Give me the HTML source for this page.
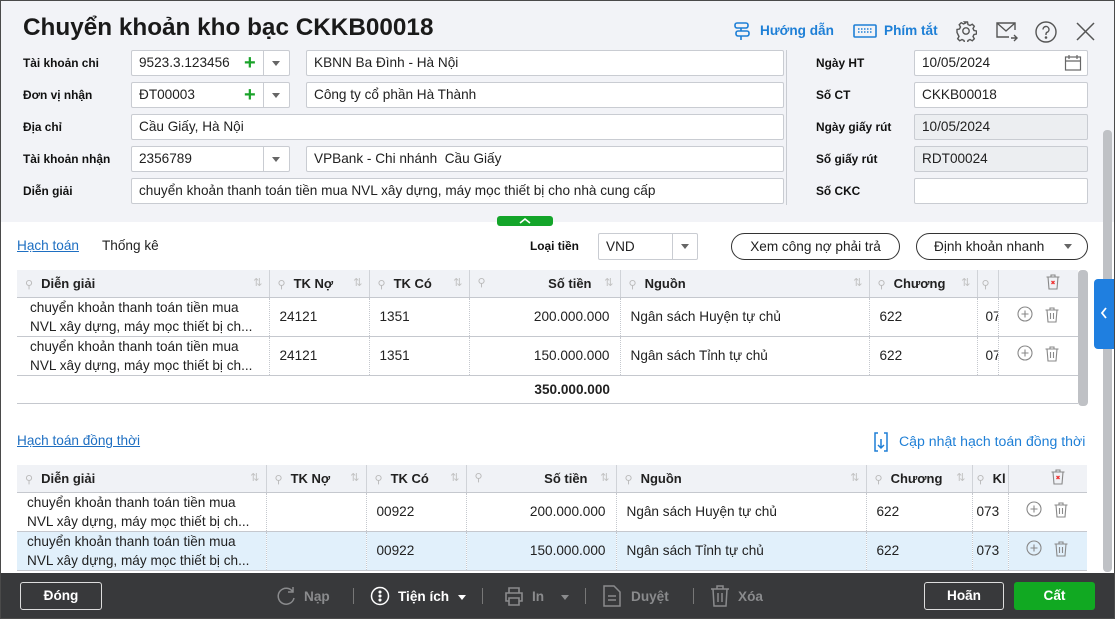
<!DOCTYPE html>
<html><head><meta charset="utf-8"><style>
*{box-sizing:border-box;margin:0;padding:0}
body{width:1115px;height:619px;overflow:hidden;position:relative;font-family:"Liberation Sans","DejaVu Sans",sans-serif;font-size:13.6px;color:#212121;background:#fff}
.a{position:absolute}
.top{left:0;top:0;width:1115px;height:222px;background:#f2f3f7}
.frame{left:0;top:0;width:1115px;height:619px;border:1px solid #4a4a4a;pointer-events:none;z-index:50}
.lbl{font-weight:bold;font-size:11.9px;color:#111}
.in{background:#fff;border:1px solid #c9ccd2;border-radius:2px;height:26px;line-height:24px;padding-left:7px;font-size:13.6px;white-space:nowrap;overflow:hidden}
.dis{background:#eceef1}
.arr{width:0;height:0;border-left:4.5px solid transparent;border-right:4.5px solid transparent;border-top:5px solid #666}
.plus{color:#1aa32a;font-size:20px;font-weight:bold;line-height:24px}
table{border-collapse:collapse;table-layout:fixed;position:absolute}
th{background:#f0f2f6;height:27px;font-weight:bold;font-size:13px;text-align:left;border-right:1px solid #d0d3d8;border-bottom:1px solid #c5c8ce;padding:0 8px;white-space:nowrap;overflow:hidden;position:relative}
td{height:39px;border-right:1px dotted #c5c8ce;border-bottom:1px solid #c5c8ce;padding:0 10px;font-size:13.6px;line-height:19px;white-space:nowrap;overflow:hidden}
td.r{text-align:right}
.pin{color:#bbb;font-weight:normal;font-size:11px;margin-right:8px}
.srt{position:absolute;right:6px;top:6px;color:#c2c2c2;font-weight:normal;font-size:11px}
.pill{border:1px solid #333;border-radius:14px;height:27px;line-height:25px;text-align:center;font-size:13.6px;background:#fff}
.foot{left:0;top:573px;width:1115px;height:46px;background:#38393b}
.fb{color:#fff;font-weight:bold;font-size:13.6px}
.gr{color:#8a8b8d;font-weight:bold;font-size:13.6px}
.act{border-right:none;padding:0;text-align:center}
tr.tot td{height:28px;border-right:none}
</style></head><body>
<svg width="0" height="0" style="position:absolute"><defs>
<g id="pl" fill="none" stroke="#888" stroke-width="1.1"><circle cx="8" cy="8" r="7"/><path d="M8 4.5v7M4.5 8h7"/></g>
<g id="tr" fill="none" stroke="#888" stroke-width="1.1"><path d="M1.5 4h13M6 4V2h4v2M3 4l1 12h8l1-12M6.5 7v6M9.5 7v6"/></g>
<g id="trr" fill="none" stroke="#888" stroke-width="1.1"><path d="M1.5 4h13M6 4V2h4v2M3 4l1 12h8l1-12"/><path d="M6.5 8l3 3M9.5 8l-3 3" stroke="#e33" stroke-width="1.3"/></g>
</defs></svg>
<div class="a top"></div>
<div class="a" style="left:23px;top:14px;font-size:24.3px;font-weight:bold;color:#1a1a1a">Chuyển khoản kho bạc CKKB00018</div>
<svg class="a" style="left:732px;top:21px" width="20" height="20" viewBox="0 0 20 20" fill="none" stroke="#1e7fd6" stroke-width="1.6"><rect x="3" y="2" width="13" height="5" rx="2"/><rect x="4" y="10" width="13" height="5" rx="2"/><path d="M9 7v3M9 15v4"/></svg>
<div class="a" style="left:760px;top:23px;color:#1e7fd6;font-weight:bold;font-size:13.6px">Hướng dẫn</div>
<svg class="a" style="left:853px;top:24px" width="24" height="14" viewBox="0 0 24 14" fill="none" stroke="#1e7fd6" stroke-width="1.6"><rect x="1" y="1" width="22" height="12" rx="1"/><path d="M5 5h14M5 8h14" stroke-dasharray="1.5 1.5"/></svg>
<div class="a" style="left:884px;top:23px;color:#1e7fd6;font-weight:bold;font-size:13.6px">Phím tắt</div>
<svg class="a" style="left:955px;top:20px" width="22" height="22" viewBox="0 0 22 22" fill="none" stroke="#555" stroke-width="1.4"><circle cx="11" cy="11" r="3.2"/><path d="M9.5 2h3l.5 2.5 2 1 2.3-1.3 2 2-1.3 2.3 1 2 2.5.5v3l-2.5.5-1 2 1.3 2.3-2 2-2.3-1.3-2 1-.5 2.5h-3l-.5-2.5-2-1-2.3 1.3-2-2 1.3-2.3-1-2L2 12.5v-3l2.5-.5 1-2-1.3-2.3 2-2 2.3 1.3 2-1z"/></svg>
<svg class="a" style="left:995px;top:21px" width="24" height="22" viewBox="0 0 24 22" fill="none" stroke="#555" stroke-width="1.4"><path d="M20 9V2H2v14h12"/><path d="M2 2l9 8 9-8"/><path d="M16 17h6M19 14l3 3-3 3"/></svg>
<svg class="a" style="left:1035px;top:21px" width="22" height="22" viewBox="0 0 22 22" fill="none" stroke="#555" stroke-width="1.4"><circle cx="11" cy="11" r="10"/><path d="M8 8.5a3 3 0 1 1 4 2.8c-.8.4-1 1-1 2v.7"/><circle cx="11" cy="16.5" r=".6" fill="#555"/></svg>
<svg class="a" style="left:1076px;top:22px" width="19" height="19" viewBox="0 0 19 19" stroke="#555" stroke-width="1.5"><path d="M1 1l17 17M18 1L1 18"/></svg>

<div class="a lbl" style="left:23px;top:56px">Tài khoản chi</div>
<div class="a lbl" style="left:23px;top:88px">Đơn vị nhận</div>
<div class="a lbl" style="left:23px;top:120px">Địa chỉ</div>
<div class="a lbl" style="left:23px;top:152px">Tài khoản nhận</div>
<div class="a lbl" style="left:23px;top:184px">Diễn giải</div>

<div class="a in" style="left:131px;top:50px;width:159px">9523.3.123456</div>
<div class="a plus" style="left:244px;top:51px">+</div>
<div class="a" style="left:263px;top:51px;width:1px;height:24px;background:#c9ccd2"></div>
<div class="a arr" style="left:272px;top:61px"></div>
<div class="a in" style="left:306px;top:50px;width:478px">KBNN Ba Đình - Hà Nội</div>

<div class="a in" style="left:131px;top:82px;width:159px">ĐT00003</div>
<div class="a plus" style="left:244px;top:83px">+</div>
<div class="a" style="left:263px;top:83px;width:1px;height:24px;background:#c9ccd2"></div>
<div class="a arr" style="left:272px;top:93px"></div>
<div class="a in" style="left:306px;top:82px;width:478px">Công ty cổ phần Hà Thành</div>

<div class="a in" style="left:131px;top:114px;width:653px">Cầu Giấy, Hà Nội</div>

<div class="a in" style="left:131px;top:146px;width:159px">2356789</div>
<div class="a" style="left:263px;top:147px;width:1px;height:24px;background:#c9ccd2"></div>
<div class="a arr" style="left:272px;top:157px"></div>
<div class="a in" style="left:306px;top:146px;width:478px">VPBank - Chi nhánh&nbsp; Cầu Giấy</div>

<div class="a in" style="left:131px;top:178px;width:653px">chuyển khoản thanh toán tiền mua NVL xây dựng, máy mọc thiết bị cho nhà cung cấp</div>

<div class="a" style="left:786px;top:50px;width:1px;height:155px;background:#c9ccd2"></div>

<div class="a lbl" style="left:816px;top:56px">Ngày HT</div>
<div class="a lbl" style="left:816px;top:88px">Số CT</div>
<div class="a lbl" style="left:816px;top:120px">Ngày giấy rút</div>
<div class="a lbl" style="left:816px;top:152px">Số giấy rút</div>
<div class="a lbl" style="left:816px;top:184px">Số CKC</div>
<div class="a in" style="left:914px;top:50px;width:174px">10/05/2024</div>
<svg class="a" style="left:1064px;top:54px" width="18" height="18" viewBox="0 0 18 18" fill="none" stroke="#666" stroke-width="1.2"><rect x="1.5" y="3" width="15" height="13"/><path d="M1.5 7h15M5 1v4M13 1v4"/></svg>
<div class="a in" style="left:914px;top:82px;width:174px">CKKB00018</div>
<div class="a in dis" style="left:914px;top:114px;width:174px">10/05/2024</div>
<div class="a in dis" style="left:914px;top:146px;width:174px">RDT00024</div>
<div class="a in" style="left:914px;top:178px;width:174px"></div>

<div class="a" style="left:497px;top:216px;width:56px;height:10px;background:#14a52a;border-radius:3px"></div>
<svg class="a" style="left:519px;top:217px" width="12" height="7" viewBox="0 0 12 7" fill="none" stroke="#fff" stroke-width="1.6"><path d="M1 6l5-4 5 4"/></svg>

<div class="a" style="left:1103px;top:130px;width:9px;height:442px;background:#bfc1c5;border-radius:4px"></div>
<div class="a" style="left:1094px;top:279px;width:21px;height:70px;background:#1f7fe0;border-radius:4px 0 0 4px"></div>
<svg class="a" style="left:1099px;top:307px" width="10" height="12" viewBox="0 0 10 12" fill="none" stroke="#fff" stroke-width="1.8"><path d="M7 1L3 6l4 5"/></svg>

<div class="a" style="left:17px;top:238px;color:#1e6fc2;font-size:13.6px;text-decoration:underline">Hạch toán</div>
<div class="a" style="left:102px;top:238px;font-size:13.6px">Thống kê</div>
<div class="a lbl" style="left:530px;top:239px">Loại tiền</div>
<div class="a in" style="left:598px;top:233px;width:100px;height:27px;line-height:25px">VND</div>
<div class="a" style="left:672px;top:234px;width:1px;height:25px;background:#c9ccd2"></div>
<div class="a arr" style="left:681px;top:244px"></div>
<div class="a pill" style="left:731px;top:233px;width:169px">Xem công nợ phải trả</div>
<div class="a pill" style="left:916px;top:233px;width:172px;text-align:left;padding-left:17px">Định khoản nhanh</div>
<div class="a arr" style="left:1064px;top:244px"></div>

<table style="left:17px;top:270px;width:1061px">
<colgroup><col style="width:252px"><col style="width:100px"><col style="width:100px"><col style="width:151px"><col style="width:249px"><col style="width:108px"><col style="width:21px"><col style="width:80px"></colgroup>
<tr><th><span class="pin">⚲</span>Diễn giải<span class="srt">⇅</span></th><th><span class="pin">⚲</span>TK Nợ<span class="srt">⇅</span></th><th><span class="pin">⚲</span>TK Có<span class="srt">⇅</span></th><th style="text-align:right;padding-right:28px"><span class="pin" style="position:absolute;left:8px">⚲</span>Số tiền<span class="srt">⇅</span></th><th><span class="pin">⚲</span>Nguồn<span class="srt">⇅</span></th><th><span class="pin">⚲</span>Chương<span class="srt">⇅</span></th><th style="padding:0 4px"><span class="pin">⚲</span></th><th class="act" style="border-right:none"><svg width="16" height="17" viewBox="0 0 16 17" style="margin-left:30px"><use href="#trr"/></svg></th></tr>
<tr><td style="padding-left:13px">chuyển khoản thanh toán tiền mua<br>NVL xây dựng, máy mọc thiết bị ch...</td><td>24121</td><td>1351</td><td class="r">200.000.000</td><td>Ngân sách Huyện tự chủ</td><td>622</td><td style="padding:0 0 0 8px">07</td><td class="act"><svg width="16" height="17" viewBox="0 0 16 17"><use href="#pl"/></svg>&nbsp;&nbsp;&nbsp;<svg width="16" height="17" viewBox="0 0 16 17"><use href="#tr"/></svg></td></tr>
<tr><td style="padding-left:13px">chuyển khoản thanh toán tiền mua<br>NVL xây dựng, máy mọc thiết bị ch...</td><td>24121</td><td>1351</td><td class="r">150.000.000</td><td>Ngân sách Tỉnh tự chủ</td><td>622</td><td style="padding:0 0 0 8px">07</td><td class="act"><svg width="16" height="17" viewBox="0 0 16 17"><use href="#pl"/></svg>&nbsp;&nbsp;&nbsp;<svg width="16" height="17" viewBox="0 0 16 17"><use href="#tr"/></svg></td></tr>
<tr class="tot"><td></td><td></td><td></td><td class="r" style="font-weight:bold">350.000.000</td><td></td><td></td><td></td><td></td></tr>
</table>
<div class="a" style="left:1078px;top:270px;width:10px;height:136px;background:#bfc1c5;border-radius:4px"></div>

<div class="a" style="left:17px;top:433px;color:#1e6fc2;font-size:13.6px;text-decoration:underline">Hạch toán đồng thời</div>
<svg class="a" style="left:873px;top:432px" width="16" height="20" viewBox="0 0 16 20" fill="none" stroke="#1e7fd6" stroke-width="1.5"><path d="M5 1H2v18h3M11 1h3v18h-3M8 7v9M5 13l3 3 3-3"/></svg>
<div class="a" style="left:899px;top:433px;color:#1e7fd6;font-size:14.1px">Cập nhật hạch toán đồng thời</div>

<table style="left:17px;top:465px;width:1070px">
<colgroup><col style="width:249px"><col style="width:100px"><col style="width:100px"><col style="width:150px"><col style="width:250px"><col style="width:106px"><col style="width:36px"><col style="width:79px"></colgroup>
<tr><th><span class="pin">⚲</span>Diễn giải<span class="srt">⇅</span></th><th><span class="pin">⚲</span>TK Nợ<span class="srt">⇅</span></th><th><span class="pin">⚲</span>TK Có<span class="srt">⇅</span></th><th style="text-align:right;padding-right:28px"><span class="pin" style="position:absolute;left:8px">⚲</span>Số tiền<span class="srt">⇅</span></th><th><span class="pin">⚲</span>Nguồn<span class="srt">⇅</span></th><th><span class="pin">⚲</span>Chương<span class="srt">⇅</span></th><th style="padding:0 4px"><span class="pin">⚲</span>Kl</th><th class="act" style="border-right:none"><svg width="16" height="17" viewBox="0 0 16 17" style="margin-left:20px"><use href="#trr"/></svg></th></tr>
<tr><td>chuyển khoản thanh toán tiền mua<br>NVL xây dựng, máy mọc thiết bị ch...</td><td></td><td>00922</td><td class="r">200.000.000</td><td>Ngân sách Huyện tự chủ</td><td>622</td><td style="padding:0 4px">073</td><td class="act"><svg width="16" height="17" viewBox="0 0 16 17"><use href="#pl"/></svg>&nbsp;&nbsp;&nbsp;<svg width="16" height="17" viewBox="0 0 16 17"><use href="#tr"/></svg></td></tr>
<tr style="background:#e1f0fb"><td>chuyển khoản thanh toán tiền mua<br>NVL xây dựng, máy mọc thiết bị ch...</td><td></td><td>00922</td><td class="r">150.000.000</td><td>Ngân sách Tỉnh tự chủ</td><td>622</td><td style="padding:0 4px">073</td><td class="act"><svg width="16" height="17" viewBox="0 0 16 17"><use href="#pl"/></svg>&nbsp;&nbsp;&nbsp;<svg width="16" height="17" viewBox="0 0 16 17"><use href="#tr"/></svg></td></tr>
</table>

<div class="a foot"></div>
<div class="a fb" style="left:20px;top:582px;width:82px;height:28px;border:1px solid #ddd;border-radius:3px;text-align:center;line-height:26px">Đóng</div>
<svg class="a" style="left:276px;top:586px" width="20" height="20" viewBox="0 0 20 20" fill="none" stroke="#8a8b8d" stroke-width="1.5"><path d="M17 6A8 8 0 1 0 18 12"/><path d="M17 1v5h-5"/></svg>
<div class="a gr" style="left:304px;top:589px">Nạp</div>
<div class="a" style="left:353px;top:588px;width:1px;height:16px;background:#777"></div>
<svg class="a" style="left:370px;top:586px" width="20" height="20" viewBox="0 0 20 20" fill="none" stroke="#fff" stroke-width="1.5"><circle cx="10" cy="10" r="8.5"/><circle cx="10" cy="6" r=".8" fill="#fff"/><circle cx="10" cy="10" r=".8" fill="#fff"/><circle cx="10" cy="14" r=".8" fill="#fff"/></svg>
<div class="a fb" style="left:398px;top:589px">Tiện ích</div>
<div class="a" style="left:458px;top:595px;border-left:4px solid transparent;border-right:4px solid transparent;border-top:5px solid #fff"></div>
<div class="a" style="left:482px;top:588px;width:1px;height:16px;background:#777"></div>
<svg class="a" style="left:504px;top:586px" width="20" height="20" viewBox="0 0 20 20" fill="none" stroke="#8a8b8d" stroke-width="1.6"><path d="M5 7V2h10v5M5 15H2V7h16v8h-3M5 12h10v7H5z"/></svg>
<div class="a gr" style="left:532px;top:589px">In</div>
<div class="a" style="left:561px;top:595px;border-left:4px solid transparent;border-right:4px solid transparent;border-top:5px solid #8a8b8d"></div>
<div class="a" style="left:585px;top:588px;width:1px;height:16px;background:#777"></div>
<svg class="a" style="left:603px;top:585px" width="18" height="22" viewBox="0 0 18 22" fill="none" stroke="#8a8b8d" stroke-width="1.5"><path d="M1 1h10l6 6v14H1zM5 11h8M5 15h8"/></svg>
<div class="a gr" style="left:631px;top:589px">Duyệt</div>
<div class="a" style="left:693px;top:588px;width:1px;height:16px;background:#777"></div>
<svg class="a" style="left:710px;top:585px" width="20" height="22" viewBox="0 0 20 22" fill="none" stroke="#8a8b8d" stroke-width="1.5"><path d="M1 4h18M7 4V1h6v3M3 4l1 17h12l1-17M8 8v9M12 8v9"/></svg>
<div class="a gr" style="left:738px;top:589px">Xóa</div>
<div class="a fb" style="left:924px;top:582px;width:80px;height:28px;border:1px solid #ddd;border-radius:3px;text-align:center;line-height:26px">Hoãn</div>
<div class="a fb" style="left:1014px;top:582px;width:81px;height:28px;background:#11a922;border-radius:3px;text-align:center;line-height:28px">Cất</div>
<div class="a frame"></div>
</body></html>
